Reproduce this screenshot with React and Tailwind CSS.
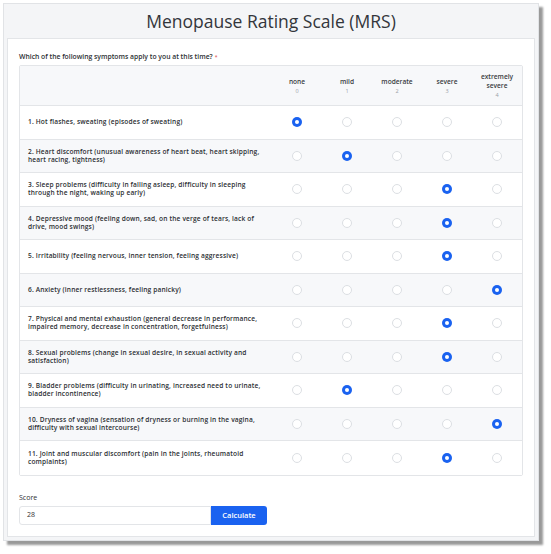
import React from "react";

const LEVELS = [
  { label: "none", value: 0 },
  { label: "mild", value: 1 },
  { label: "moderate", value: 2 },
  { label: "severe", value: 3 },
  { label: "extremely severe", value: 4 },
];

const SYMPTOMS = [
  { text: "1. Hot flashes, sweating (episodes of sweating)", answer: 0 },
  { text: "2. Heart discomfort (unusual awareness of heart beat, heart skipping, heart racing, tightness)", answer: 1 },
  { text: "3. Sleep problems (difficulty in falling asleep, difficulty in sleeping through the night, waking up early)", answer: 3 },
  { text: "4. Depressive mood (feeling down, sad, on the verge of tears, lack of drive, mood swings)", answer: 3 },
  { text: "5. Irritability (feeling nervous, inner tension, feeling aggressive)", answer: 3 },
  { text: "6. Anxiety (inner restlessness, feeling panicky)", answer: 4 },
  { text: "7. Physical and mental exhaustion (general decrease in performance, impaired memory, decrease in concentration, forgetfulness)", answer: 3 },
  { text: "8. Sexual problems (change in sexual desire, in sexual activity and satisfaction)", answer: 3 },
  { text: "9. Bladder problems (difficulty in urinating, increased need to urinate, bladder incontinence)", answer: 1 },
  { text: "10. Dryness of vagina (sensation of dryness or burning in the vagina, difficulty with sexual intercourse)", answer: 4 },
  { text: "11. Joint and muscular discomfort (pain in the joints, rheumatoid complaints)", answer: 3 },
];

const Radio = ({ checked }) =>
  checked ? (
    <span className="block w-[10px] h-[10px] rounded-full bg-[#1a62f0] flex items-center justify-center">
      <span className="block w-[4px] h-[4px] rounded-full bg-white"></span>
    </span>
  ) : (
    <span className="block w-[10px] h-[10px] rounded-full border border-[#dcdfe3] bg-white"></span>
  );

export default function App() {
  return (
    <div className="min-h-screen bg-white pt-[3px] pl-[3px] font-['Open_Sans',sans-serif] text-[#333]">
      <div className="w-[536px] h-[538px] bg-[#f4f5f7] border border-[#e1e3e6] shadow-[4px_4px_2px_rgba(0,0,0,0.4)] flex flex-col">
        <h1 className="h-[34px] flex items-center justify-center text-[17.5px] font-medium leading-none text-[#33363b] pt-[1px]">
          Menopause Rating Scale (MRS)
        </h1>
        <div className="mx-[3px] flex-1 mb-[3px] bg-white border border-[#e3e5e8] px-[11px] pt-[13px]">
          <p className="text-[6.8px] font-semibold text-[#2c2f33] leading-[10px] mb-[3px]">
            Which of the following symptoms apply to you at this time?
            <span className="text-[#e05555] ml-[2px] text-[5px] align-middle">*</span>
          </p>
          <div className="w-[504px] border border-[#e3e5e8] rounded-[2px] text-[6.6px]">
            <div className="grid grid-cols-[252px_repeat(5,1fr)] h-[40px] bg-[#f7f8fa] border-b border-[#e3e5e8]">
              <div></div>
              {LEVELS.map((l) => (
                <div key={l.value} className="flex flex-col items-center justify-center text-center">
                  <span className="font-semibold text-[#3a3d42] leading-[9px] max-w-[40px]">{l.label}</span>
                  <span className="text-[5.5px] text-[#9aa0a6] mt-[3px] leading-none">{l.value}</span>
                </div>
              ))}
            </div>
            {SYMPTOMS.map((s, i) => (
              <div
                key={i}
                className={
                  "grid grid-cols-[252px_repeat(5,1fr)] h-[33.5px] items-center " +
                  (i % 2 === 1 ? "bg-[#f7f8fa] " : "bg-white ") +
                  (i < SYMPTOMS.length - 1 ? "border-b border-[#e3e5e8]" : "")
                }
              >
                <div className="pl-[8px] pr-[10px] font-semibold tracking-[0.15px] text-[#2c2f33] leading-[8px]">{s.text}</div>
                {LEVELS.map((l) => (
                  <div key={l.value} className="flex justify-center">
                    <Radio checked={s.answer === l.value} />
                  </div>
                ))}
              </div>
            ))}
          </div>
          <div className="mt-[17px]">
            <label className="block text-[7px] font-medium text-[#2c2f33] leading-[10px] mb-[3px]">Score</label>
            <div className="flex h-[19px] w-[248px]">
              <div className="w-[192px] border border-[#e3e5e8] rounded-l-[3px] flex items-center pl-[7px] text-[7px] text-[#333]">28</div>
              <button className="flex-1 bg-[#1a62f0] rounded-r-[3px] text-white text-[7.5px] font-semibold">Calculate</button>
            </div>
          </div>
        </div>
      </div>
    </div>
  );
}
